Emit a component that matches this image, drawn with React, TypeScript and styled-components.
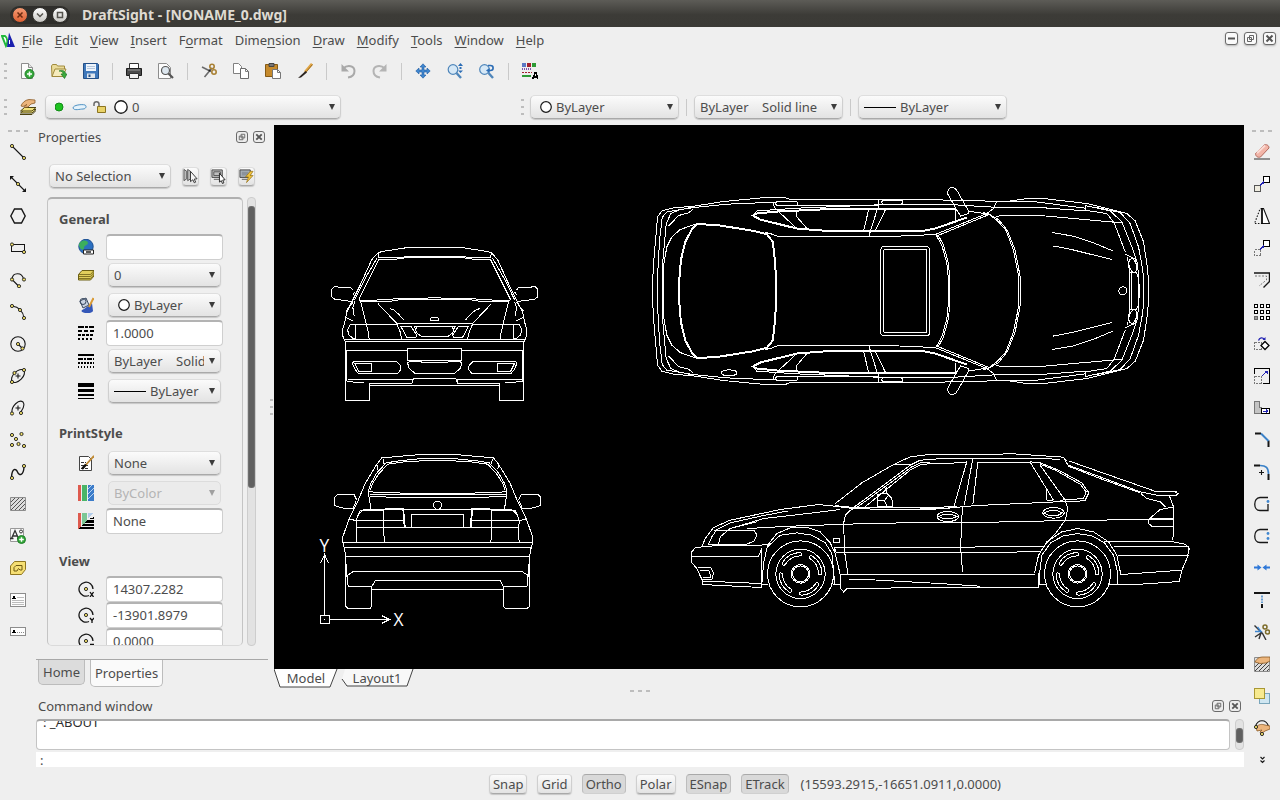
import React from "react";
import styled, { createGlobalStyle, css } from "styled-components";

const Global = createGlobalStyle`
  * { box-sizing: border-box; }
  body { margin: 0; background: #efefef; }
  body, button, select, input {
    font-family: "Noto Sans", "Open Sans", sans-serif;
    font-size: 13px;
    line-height: 18px;
    color: #4c4c4c;
  }
`;

/* ---------- shell ---------- */

const Shell = styled.div`
  display: flex;
  flex-direction: column;
  height: 100vh;
  min-height: 640px;
  background: #efefef;
  overflow: hidden;
`;

const TitleBar = styled.header`
  display: flex;
  align-items: center;
  gap: 12px;
  height: 27px;
  flex: none;
  padding: 2px 10px 0;
  background: linear-gradient(#5d5c57, #3c3b37 55%, #3b3a36);
`;

const WindowButtons = styled.div`
  display: flex;
  align-items: center;
  gap: 4px;
  height: 18px;
  padding: 0 2px;
  border-radius: 9px;
  background: #2f2e2b;
`;

const RoundButton = styled.button<{ $close?: boolean }>`
  display: flex;
  width: 16px;
  height: 16px;
  padding: 0;
  border: 1px solid #33322e;
  border-radius: 50%;
  background: ${(p) =>
    p.$close
      ? "linear-gradient(#f59b74, #de5f32)"
      : "linear-gradient(#ffffff, #c9c8c4)"};
`;

const WindowTitle = styled.h1`
  margin: 0;
  font-size: 14px;
  line-height: 18px;
  font-weight: 700;
  color: #dfdbd2;
`;

const MenuBar = styled.nav`
  display: flex;
  align-items: center;
  height: 26px;
  flex: none;
  padding: 0 4px 0 1px;
`;

const Logo = styled.svg`
  width: 14px;
  height: 16px;
  margin-right: 1px;
`;

const MenuButton = styled.button`
  border: 0;
  padding: 0 6px;
  background: none;
  u {
    text-underline-offset: 2px;
  }
`;

const MdiButtons = styled.div`
  display: flex;
  gap: 6px;
  margin-left: auto;
  padding-bottom: 3px;
`;

const FrameButton = styled.button<{ $raised?: boolean }>`
  display: flex;
  width: ${(p) => (p.$raised ? 13 : 12)}px;
  height: ${(p) => (p.$raised ? 13 : 12)}px;
  padding: 0;
  border: 1px solid #6a6a6a;
  border-radius: 3px;
  background: ${(p) => (p.$raised ? "#fafafa" : "#ececec")};
  box-shadow: ${(p) => (p.$raised ? "0 1px 2px #b5b5b5" : "none")};
`;

/* ---------- toolbars ---------- */

const ToolRow = styled.div`
  display: flex;
  align-items: center;
  height: 36px;
  flex: none;
`;

const ToolButton = styled.button`
  display: flex;
  align-items: center;
  justify-content: center;
  width: 32px;
  height: 32px;
  flex: none;
  padding: 0;
  border: 0;
  background: none;
`;

const Rule = styled.span`
  width: 1px;
  height: 17px;
  margin: 0 5px;
  flex: none;
  background: #c9c9c9;
`;

const Grip = styled.span<{ $across?: boolean }>`
  display: flex;
  flex: none;
  flex-direction: ${(p) => (p.$across ? "row" : "column")};
  align-items: center;
  justify-content: center;
  gap: ${(p) => (p.$across ? 4 : 5)}px;
  ${(p) => (p.$across ? "height: 11px;" : "width: 11px;")}
  &::before, &::after { content: ""; }
  &::before, &::after, i {
    width: ${(p) => (p.$across ? 4 : 3)}px;
    height: 2px;
    background: #bdbdbd;
  }
`;

const SideTools = styled.div`
  display: flex;
  flex-direction: column;
  align-items: center;
  width: 36px;
  flex: none;
  overflow: hidden;
`;

/* ---------- fields ---------- */

const raised = css`
  border: 1px solid #cfcfcf;
  border-top-color: #dedede;
  border-bottom-color: #a9a9a9;
  background: linear-gradient(#fbfbfb, #e3e3e3);
  box-shadow: 0 1px 1px #c6c6c6;
`;

const ComboBox = styled.label<{ $width?: number; $off?: boolean }>`
  display: flex;
  align-items: center;
  gap: 4px;
  height: 24px;
  width: ${(p) => (p.$width ? p.$width + "px" : "auto")};
  flex: ${(p) => (p.$width ? "none" : "1")};
  min-width: 0;
  padding: 0 4px 0 5px;
  border-radius: 5px;
  ${raised}
  ${(p) => p.$off && "border-color: #dcdcdc; background: #ebebeb; box-shadow: none;"}
  & > svg { flex: none; }
`;

const Picker = styled.select`
  appearance: none;
  flex: 1;
  min-width: 0;
  padding: 0;
  border: 0;
  background: none;
  overflow: hidden;
  outline: none;
  opacity: 1;
  &:disabled { color: #b4b4b4; }
`;

const TextField = styled.input`
  width: 117px;
  height: 26px;
  padding: 0 6px 2px;
  border: 1px solid #cfcfcf;
  border-top: 2px solid #b3b3b3;
  border-radius: 4px;
  background: #fff;
  outline: none;
`;

/* ---------- work area ---------- */

const Body = styled.div`
  display: flex;
  flex: 1;
  min-height: 0;
`;

const Center = styled.main`
  display: flex;
  flex-direction: column;
  flex: 1;
  min-width: 0;
`;

const Upper = styled.div`
  display: flex;
  flex: 1;
  min-height: 0;
`;

const Dock = styled.section`
  display: flex;
  flex-direction: column;
  width: 232px;
  flex: none;
`;

const DockHead = styled.div`
  display: flex;
  align-items: center;
  gap: 5px;
  height: 24px;
  flex: none;
  padding: 0 3px 0 2px;
`;

const DockTitle = styled.h2`
  flex: 1;
  margin: 0;
  font-size: 13px;
  line-height: 18px;
  font-weight: 400;
`;

const SelectionRow = styled.div`
  display: flex;
  align-items: center;
  gap: 11px;
  padding: 15px 13px 9px;
  flex: none;
`;

const SmallButton = styled.button`
  display: flex;
  align-items: center;
  justify-content: center;
  width: 17px;
  height: 19px;
  padding: 0;
  border-radius: 4px;
  ${raised}
`;

const Scroller = styled.div`
  display: flex;
  gap: 4px;
  flex: 1 1 0px;
  min-height: 0;
  padding: 0 12px 0 11px;
`;

const PropertyFrame = styled.div`
  flex: 1;
  overflow: hidden;
  padding: 5px 11px 0;
  border: 1px solid #c4c4c4;
  border-top: 2px solid #b0b0b0;
  border-bottom-color: #dadada;
  border-radius: 5px;
`;

const Track = styled.div`
  width: 9px;
  flex: none;
  padding: 9px 1px 0;
  border: 1px solid #cdcdcd;
  border-radius: 4px;
  background: #e2e2e2;
`;

const Thumb = styled.div<{ $share: number }>`
  height: ${(p) => p.$share}%;
  background: #606060;
  border-radius: 2px;
  box-shadow: 0 0 0 1px #6e6e6e;
`;

const Group = styled.section`
  margin-bottom: 12px;
`;

const GroupTitle = styled.h3`
  margin: 0;
  font-size: 13px;
  line-height: 30px;
  font-weight: 700;
`;

const Field = styled.div<{ $tall?: boolean }>`
  display: flex;
  align-items: center;
  height: ${(p) => (p.$tall ? 30 : 26)}px;
  & > svg { margin: 0 12px 0 19px; flex: none; }
`;

const FieldSlot = styled.div`
  display: flex;
  width: 117px;
  flex: none;
  padding: 0 2px;
`;

const DockTabs = styled.div`
  display: flex;
  align-items: flex-start;
  gap: 5px;
  height: 29px;
  margin-top: 13px;
  flex: none;
  padding: 0 2px;
  border-top: 1px solid #a8a8a8;
`;

const DockTab = styled.button<{ $active?: boolean }>`
  height: ${(p) => (p.$active ? 27 : 25)}px;
  padding: 0 4px;
  border: 1px solid #bcbcbc;
  border-top: 0;
  border-radius: 0 0 5px 5px;
  background: ${(p) => (p.$active ? "#fafafa" : "#dcdcdc")};
`;

const SplitHandle = styled.div<{ $across?: boolean }>`
  display: flex;
  flex: none;
  justify-content: center;
  ${(p) => (p.$across ? "height: 5px; align-items: center;" : "width: 6px;")}
`;

const Stage = styled.section`
  display: flex;
  flex-direction: column;
  flex: 1;
  min-width: 0;
`;

const Drawing = styled.svg`
  display: block;
  width: 100%;
  flex: 1;
  min-height: 0;
  background: #000;
  fill: none;
  stroke: #fff;
  stroke-width: 1px;
  shape-rendering: crispEdges;
  path, rect, circle, ellipse { vector-effect: non-scaling-stroke; }
  .heavy { stroke-width: 2px; }
  text {
    font-family: "Open Sans", sans-serif;
    font-size: 52px;
    font-weight: 400;
    fill: #fff;
    stroke: none;
  }
`;

const SheetTabs = styled.div`
  display: flex;
  gap: 2px;
  height: 19px;
  flex: none;
`;

const SheetTab = styled.button`
  display: grid;
  padding: 0;
  border: 0;
  background: none;
  & > * { grid-area: 1 / 1; }
  & > svg { width: 100%; height: 19px; }
  & > span { padding: 0 12px; position: relative; }
`;

const CommandHead = styled(DockHead)`
  height: 26px;
`;

const CommandBox = styled.div`
  display: flex;
  gap: 5px;
  height: 31px;
  flex: none;
`;

const History = styled.div`
  display: flex;
  flex-direction: column;
  justify-content: flex-end;
  flex: 1;
  overflow: hidden;
  padding: 0 6px;
  border: 1px solid #c4c4c4;
  border-top: 2px solid #a9a9a9;
  border-radius: 4px;
  background: #fff;
`;

const HistoryLine = styled.p`
  margin: 0;
  min-height: 18px;
  flex: none;
  line-height: 18px;
  color: #2e2e2e;
`;

const CommandInput = styled.input`
  height: 15px;
  margin-top: 2px;
  flex: none;
  padding: 0 4px;
  border: 0;
  background: #fff;
  outline: none;
`;

const StatusBar = styled.footer`
  display: flex;
  align-items: center;
  justify-content: center;
  gap: 10px;
  height: 33px;
  flex: none;
  padding: 1px 0 0 210px;
`;

const StatusButton = styled.button<{ $on?: boolean }>`
  height: 20px;
  padding: 0 3px;
  line-height: 16px;
  border-radius: 4px;
  ${raised}
  ${(p) =>
    p.$on &&
    "background: #d9d9d9; border-color: #a9a9a9 #bdbdbd #d0d0d0; box-shadow: none;"}
`;

const StatusText = styled.span`
  padding-left: 2px;
`;

const LayerGroup = styled.div`
  display: flex;
  align-items: center;
  gap: 1px;
  width: calc(40% + 5px);
  flex: none;
  min-width: 350px;
`;

const ComboIcons = styled.span`
  display: flex;
  align-items: center;
  gap: 6px;
  padding-left: 4px;
`;

const PropertyCombos = styled.div`
  display: flex;
  align-items: center;
  gap: 2px;
  padding-left: 2px;
`;

/* ---------- icons on a 16 x 16 grid ---------- */

const Dot = ({ x, y }: { x: number; y: number }) => (
  <circle cx={x} cy={y} r="1.6" fill="#f1e06a" stroke="#1d1d1d" strokeWidth=".9" />
);

const K = { fill: "none", stroke: "#161616", strokeWidth: 1.1 };
const B = { fill: "none", stroke: "#3c82c8", strokeWidth: 1.5 };
const crisp = { shapeRendering: "crispEdges" as const };

const page = "M2.5 .5h7l4 4v11h-11z";

const icons: Record<string, React.ReactNode> = {
  create: (
    <>
      <path d={page} fill="#fcfcfc" stroke="#8d8d8d" />
      <path d="M9.500 .5v4h4" fill="#e6e6e6" stroke="#8d8d8d" />
      <circle cx="10.500" cy="11" r="4.500" fill="#35a83a" stroke="#1f7d28" />
      <path d="M10.500 8.500v5M8 11h5" stroke="#fff" strokeWidth="1.500" />
    </>
  ),
  open: (
    <>
      <path d="M1 13.500L.5 3l1-1.500h4l1 1.500h7v3" fill="#eadb9a" stroke="#a08a3c" />
      <path d="M1 13.500L4 6h11l-3 7.500z" fill="#f6ecbd" stroke="#a08a3c" />
      <path d="M8 8c3 0 4 1 4 3h-2l3.500 4.500L16 11h-1.500c0-3-3-4.500-6.500-3z" fill="#3cab3c" stroke="#207a27" strokeWidth=".7" />
    </>
  ),
  save: (
    <>
      <path d="M.5 .5h14l1 1v14H.5z" fill="#3f78bb" stroke="#234f86" />
      <path d="M3 1h10v7H3z" fill="#eef4fb" />
      <path d="M4 3.500h8M4 5.500h8" stroke="#b4c7dd" />
      <path d="M4 10.500h8V15H4z" fill="#dfe6ee" />
      <path d="M5.500 11.500h2V14h-2z" fill="#234f86" />
    </>
  ),
  print: (
    <>
      <path d="M3.500 .5h9v6h-9z" fill="#fff" stroke="#333" />
      <path d="M.5 5.500h15v7H.5z" fill="#4b4b4b" stroke="#1d1d1d" />
      <path d="M2 7h12" stroke="#9a9a9a" />
      <path d="M3.500 10.500h9v5h-9z" fill="#f2f2f2" stroke="#333" />
    </>
  ),
  preview: (
    <>
      <path d="M.5 .5h8l4 4v11H.5z" fill="#fcfcfc" stroke="#8d8d8d" />
      <circle cx="7.500" cy="7.500" r="4" fill="#dde7ef" stroke="#555" strokeWidth="1.200" />
      <path d="M10.500 10.500l4.500 4.500" stroke="#555" strokeWidth="2.200" />
    </>
  ),
  cut: (
    <>
      <path d="M1 4l9 4.500M3.500 14L11 5" stroke="#6b6b6b" strokeWidth="1.600" />
      <circle cx="11" cy="3.500" r="2.200" fill="none" stroke="#a98135" strokeWidth="1.600" />
      <circle cx="13" cy="9" r="2.200" fill="none" stroke="#a98135" strokeWidth="1.600" />
      <circle cx="8.500" cy="7.500" r="1" fill="#222" />
    </>
  ),
  copy: (
    <>
      <path d="M.5 .5h5l3 3v7h-8z" fill="#fff" stroke="#808080" />
      <path d="M7.500 5.500h5l3 3v7h-8z" fill="#fff" stroke="#6b6b6b" />
      <path d="M12.500 5.500v3h3" fill="none" stroke="#808080" />
    </>
  ),
  paste: (
    <>
      <path d="M.5 1.500h12v12H.5z" fill="#c68a2c" stroke="#855a15" />
      <path d="M4 .5h5v3H4z" fill="#777" stroke="#444" />
      <path d="M7.500 6.500h5l3 3v6h-8z" fill="#fff" stroke="#777" />
      <path d="M12.500 6.500v3h3" fill="none" stroke="#777" />
    </>
  ),
  brush: (
    <>
      <path d="M15 .8L8 9" stroke="#e0a544" strokeWidth="2.600" />
      <path d="M15.500 1.500L8.500 9.700" stroke="#8a5d18" strokeWidth=".8" />
      <path d="M8.500 8L1 15l3-.5 6-5z" fill="#2b2420" />
    </>
  ),
  undo: (
    <>
      <path d="M3 5.500C8 1 14.500 3 14.500 8c0 4-3 6-6.500 6.500" fill="none" stroke="#a9a9a9" strokeWidth="2" />
      <path d="M1.500 1v7.500H9L6.500 6 4 3.500z" fill="#a9a9a9" />
    </>
  ),
  redo: (
    <>
      <path d="M13 5.500C8 1 1.500 3 1.500 8c0 4 3 6 6.500 6.500" fill="none" stroke="#b4b4b4" strokeWidth="2" />
      <path d="M14.500 1v7.500H7L9.500 6 12 3.500z" fill="#b4b4b4" />
    </>
  ),
  pan: (
    <path d="M8 .8L5 4h2v3H4V5L.8 8 4 11V9h3v3H5l3 3.200L11 12H9V9h3v2l3.200-3L12 5v2H9V4h2z" fill="#3f86cf" stroke="#1e5ba3" strokeWidth=".6" />
  ),
  zoom: (
    <>
      <circle cx="6" cy="6.500" r="4.800" fill="#d6e8f6" stroke="#4f86ba" strokeWidth="1.200" />
      <path d="M9.500 10l4.500 5" stroke="#4f86ba" strokeWidth="2.400" />
      <path d="M13.500 0l2.500 3h-5zM13.500 10L11 7.500h5z" fill="#2c6db5" />
      <path d="M12.500 4h2v2h-2z" fill="#2c6db5" />
    </>
  ),
  zoomBack: (
    <>
      <circle cx="5.500" cy="6.500" r="4.800" fill="#d6e8f6" stroke="#4f86ba" strokeWidth="1.200" />
      <path d="M9.500 10l4.500 5" stroke="#4f86ba" strokeWidth="2.400" />
      <path d="M9 2.500h2.500c3.500 0 3.500 5 0 5H9" fill="none" stroke="#2c6db5" strokeWidth="1.600" />
      <path d="M10.500 5L7 7.500l3.500 2.500z" fill="#2c6db5" />
    </>
  ),
  styles: (
    <g {...crisp}>
      <path d="M0 0h4v4H0z" fill="#5c78c4" />
      <path d="M5 0h4v4H5z" fill="#a3202f" />
      <path d="M10 0h4v4h-4z" fill="#2e9a35" />
      <path d="M0 6h10" stroke="#7c53b0" strokeWidth="2" strokeDasharray="1 1" />
      <path d="M0 9.500h10" stroke="#a3202f" strokeDasharray="2 1" />
      <path d="M0 12.500h9" stroke="#2e9a35" strokeWidth="2" />
      <path d="M10.500 16l2.500-6h1l2 6M11.500 14h4" fill="none" stroke="#000" strokeWidth="1.500" />
    </g>
  ),
  layers: (
    <>
      <path d="M.5 14l4-3.500H16L12 14z" fill="#f1e27c" stroke="#4d4310" />
      <path d="M.5 12l4-3.500H16L12 12z" fill="#f1e27c" stroke="#4d4310" />
      <path d="M0 15.500h12l4-4" fill="none" stroke="#4d4310" />
      <path d="M1 7c1-3 4-6 8-6.500l6 .5v3l-4 1-3 3-4 .5c0-1 2-2 3-3L3 7.500z" fill="#ecb57c" stroke="#8a5a26" strokeWidth=".8" />
    </>
  ),
  /* drawing tools */
  line: (<><path d="M2 2l12 12" {...K} /><Dot x={2} y={2} /><Dot x={14} y={14} /></>),
  ray: (
    <>
      <path d="M1 1l14 14" {...K} />
      <path d="M0 0h4L0 4zM16 16h-4l4-4z" fill="#161616" />
      <Dot x={8} y={8} />
    </>
  ),
  polygon: <path d="M.8 8l3.700-7h7l3.700 7-3.700 7h-7z" {...K} strokeWidth={1.4} />,
  rectangle: (<><path d="M1.500 4.500h13v7h-13z" {...K} {...crisp} /><Dot x={2} y={4.5} /><Dot x={14} y={12} /></>),
  polyline: (<><path d="M8.500 14L2 7.500C2.500 0 12 0 13.500 7" {...K} /><Dot x={2} y={7.5} /><Dot x={14} y={7.5} /><Dot x={9} y={14.2} /></>),
  arc: (<><path d="M2 2c7 1 11 5 12 12" {...K} /><Dot x={2} y={2} /><Dot x={10} y={6} /><Dot x={14} y={14} /></>),
  circle: (<><circle cx="8" cy="8" r="7.200" {...K} /><path d="M8 8l4 4" {...K} /><Dot x={8} y={8} /><Dot x={12.5} y={12.5} /></>),
  ellipse: (
    <>
      <ellipse cx="8" cy="8" rx="8" ry="4.500" transform="rotate(-45 8 8)" {...K} />
      <path d="M8 5.500v5M5.500 8h5" {...K} />
      <Dot x={2} y={14} /><Dot x={14} y={2} /><Dot x={4.5} y={5} />
    </>
  ),
  ellipseArc: (
    <>
      <path d="M2 13C1 6 9-1 13 2c3 4-1 8-3 11" {...K} />
      <path d="M8 5.500v5M5.500 8h5" {...K} />
      <Dot x={2} y={13.5} /><Dot x={11} y={13} />
    </>
  ),
  points: (<><Dot x={2} y={3} /><Dot x={11.5} y={2} /><Dot x={6} y={7} /><Dot x={2} y={13} /><Dot x={8.5} y={12} /><Dot x={14} y={14} /></>),
  spline: (<><path d="M1.500 13C2 4 6 4 7.500 8s6 4 6.500-5" {...K} strokeWidth={1.4} /><Dot x={2} y={14} /><Dot x={14} y={2} /></>),
  hatch: (
    <>
      <path d="M.5 1.500h15v13H.5z" fill="#dcdcdc" stroke="#8c8c8c" />
      <path d="M1 6l4-4M1 10l8-8M1 14l12-12M5 14l10-10M9 14l6-6M13 14l2-2" stroke="#555" />
    </>
  ),
  block: (
    <>
      <path d="M.5 .5h13v13H.5z" fill="#f8f8f8" stroke="#999" />
      <path d="M1.500 10.500L5 2.500l3.500 8M3 8h4M0 10.500h3.500M7 10.500h2" fill="none" stroke="#333" strokeWidth="1.300" />
      <circle cx="11" cy="3.500" r="1.500" fill="none" stroke="#333" />
      <circle cx="11.500" cy="11.500" r="4" fill="#35a83a" stroke="#1f7d28" />
      <path d="M11.500 9.200v4.600M9.200 11.500h4.600" stroke="#fff" strokeWidth="1.400" />
    </>
  ),
  region: (
    <>
      <path d="M.5 14.500V6l4-4.500h11v8l-4 5z" fill="#f6df73" stroke="#8f7620" />
      <path d="M4 11V7.500L6 5.500h6V10h-2L8.500 8.500 7 11z" fill="none" stroke="#6f5a12" />
    </>
  ),
  note: (
    <g {...crisp}>
      <path d="M.5 1.500h15v13H.5z" fill="#fdfdfd" stroke="#8c8c8c" />
      <path d="M2.500 7l1.500-3 1.500 3M3 6h2" fill="none" stroke="#000" />
      <path d="M7 5.500h7M2 8.500h12M2 10.500h12M2 12.500h12" stroke="#bcbcbc" />
    </g>
  ),
  label: (
    <g {...crisp}>
      <path d="M.5 3.500h15v8H.5z" fill="#fdfdfd" stroke="#8c8c8c" />
      <path d="M2.500 9L4 6l1.500 3M3 8h2" fill="none" stroke="#000" />
      <path d="M7 8.500h7" stroke="#888" strokeDasharray="1 1" />
    </g>
  ),
  /* modify tools */
  erase: (
    <>
      <path d="M0 15h16" stroke="#777" strokeWidth="1.600" />
      <path d="M1.500 9.500L10 1c2-1 5 0 5 3l-8.500 9c-3 1-5-1-5-3.500z" fill="#f2b5a8" stroke="#b4695d" />
      <path d="M3 9l8-7.500" stroke="#fbdcd5" strokeWidth="2" />
    </>
  ),
  duplicate: (
    <g {...crisp}>
      <path d="M.5 9.500h6v6h-6z" fill="#efece0" stroke="#555" />
      <path d="M9.500 .5h6v6h-6z" fill="#fff" stroke="#000" />
      <path d="M6 9.500l4-4" stroke="#2424b4" strokeWidth="1.500" />
      <path d="M7 6h3v3z" fill="#2424b4" />
    </g>
  ),
  mirror: (
    <>
      <path d="M8 .5h1.500L15.500 15.500H8z" {...K} fill="#fff" />
      <path d="M8 .5L6 1 .5 15.500H8" {...K} strokeDasharray="1.500 1.500" />
      <path d="M8 0v16" stroke="#000" strokeWidth="1.400" />
    </>
  ),
  move: (
    <g {...crisp}>
      <path d="M.5 9.500h6v6h-6z" fill="none" stroke="#777" strokeDasharray="2 1" />
      <path d="M9.500 .5h6v6h-6z" fill="#fff" stroke="#000" />
      <path d="M6 9.500l4-4" stroke="#2424b4" strokeWidth="1.500" />
      <path d="M7 6h3v3z" fill="#2424b4" />
    </g>
  ),
  offset: (
    <>
      <path d="M0 1h15.500v8.500L9.500 15.500" {...K} strokeWidth={1.4} />
      <path d="M1 4h11.500v4L5 14" fill="none" stroke="#777" strokeDasharray="2 1.500" />
    </>
  ),
  pattern: (
    <g {...crisp} fill="#fff" stroke="#000" strokeWidth="1">
      <path d="M.5 .5h3v3h-3zM6.500 .5h3v3h-3zM12.500 .5h3v3h-3zM.5 6.500h3v3h-3zM6.500 6.500h3v3h-3zM12.500 6.500h3v3h-3zM6.500 12.500h3v3h-3zM12.500 12.500h3v3h-3z" />
      <path d="M.5 12.500h3v3h-3z" fill="#999" stroke="#666" />
    </g>
  ),
  rotate: (
    <>
      <path d="M.5 6.500h7v7h-7z" fill="none" stroke="#777" strokeDasharray="2 1" {...crisp} />
      <path d="M11 5.500l4 4-4 4-4-4z" fill="#fff" stroke="#000" strokeWidth="1.300" />
      <path d="M4.500 4.500c1-3 4-3.500 6-1" fill="none" stroke="#2424b4" strokeWidth="1.300" />
      <path d="M8.500 4h3V1z" fill="#2424b4" />
    </>
  ),
  scale: (
    <g {...crisp}>
      <path d="M.5 6V.5h15v15H9" fill="none" stroke="#000" />
      <path d="M.5 8.500h7v7h-7z" fill="none" stroke="#777" strokeDasharray="2 1" />
      <path d="M8 8l4-4" stroke="#2424b4" strokeWidth="1.200" />
      <path d="M10 3h4v4z" fill="#2424b4" />
    </g>
  ),
  stretch: (
    <g {...crisp}>
      <path d="M.5 1.500h5v6h2v6h-7z" fill="#c4c4c4" stroke="#777" />
      <path d="M7.500 8.500h8v5h-8z" fill="#fff" stroke="#000" />
      <path d="M9 11h3" stroke="#2424b4" />
      <path d="M12 9l3 2-3 2z" fill="#2424b4" />
    </g>
  ),
  chamfer: (<><path d="M1 1.500h6M14.500 8.500V15" {...K} strokeWidth={2} /><path d="M7 1.500l7.500 7.500" {...B} strokeWidth={2} /></>),
  fillet: (
    <>
      <path d="M0 1.500h6M14.500 10V16" {...K} strokeWidth={2} />
      <path d="M5 8.500h5M7.500 6v5" {...K} />
      <path d="M6 1.500c6 0 8.500 2 8.500 8.500" {...B} strokeWidth={1.6} />
    </>
  ),
  weld: (
    <>
      <path d="M14 1.500H6C-1 2-1 14.500 6 14.500h8V8" {...K} strokeWidth={1.3} />
      <circle cx="14" cy="5.500" r="1.400" fill="#3f86cf" />
    </>
  ),
  split: (
    <>
      <path d="M14 1.500H6C-1 2-1 14.500 6 14.500h8" {...K} strokeWidth={1.3} />
      <circle cx="14" cy="5.500" r="1.400" fill="#3f86cf" />
      <circle cx="14" cy="10.500" r="1.400" fill="#3f86cf" />
    </>
  ),
  join: (
    <>
      <path d="M0 7.500h4M12 7.500h4" stroke="#2f78d8" strokeWidth="1.800" />
      <path d="M3.500 4.500l4 3-4 3zM12.500 4.500l-4 3 4 3z" fill="#2f78d8" />
    </>
  ),
  extend: (
    <>
      <path d="M0 1h16M8 12v4" {...K} strokeWidth={2} />
      <path d="M8 3.500V11" {...B} strokeDasharray="2 1" />
    </>
  ),
  trim: (
    <>
      <path d="M.5 1.500l8 8L12 16M1 13l6-4-2 6" stroke="#333" fill="none" strokeWidth="1.400" />
      <path d="M1 7.500h6L3.500 3" fill="none" stroke="#3f86cf" strokeWidth="1.400" />
      <circle cx="11" cy="3" r="2" fill="none" stroke="#7d6c2a" strokeWidth="1.500" />
      <circle cx="13.500" cy="8" r="2" fill="none" stroke="#7d6c2a" strokeWidth="1.500" />
    </>
  ),
  hatchEdit: (
    <>
      <path d="M.5 1.500h15v14H.5z" fill="#dcdcdc" stroke="#8c8c8c" />
      <path d="M1 11l4-4M1 15l8-8M5 15l9-9M9 15l6-6M13 15l2-2" stroke="#444" />
      <path d="M1 6c2-4 5-5 8-5h7v4l-4 2-6 .5z" fill="#ecb57c" stroke="#8a5a26" strokeWidth=".8" />
    </>
  ),
  order: (
    <g {...crisp}>
      <path d="M5.500 5.500h10v10h-10z" fill="#cfe6f1" stroke="#7aa6bb" />
      <path d="M.5 .5h10v10H.5z" fill="#f7ea8f" stroke="#a99834" />
    </g>
  ),
  polyEdit: (
    <>
      <path d="M1.500 6C4-1 12-1 14.500 6" {...K} />
      <path d="M2 7c3-3 6-3 9-2l5 1v3l-5 2-4 3-1-2 2-2-5 1z" fill="#ecb57c" stroke="#8a5a26" strokeWidth=".8" />
      <Dot x={2} y={7} /><Dot x={8} y={14} />
    </>
  ),
  more: <path d="M6.500 5l2 2 2-2M6.500 8.500l2 2 2-2" {...K} />,
  /* properties */
  globe: (
    <>
      <circle cx="8" cy="7.500" r="7.200" fill="#2b6fc0" stroke="#1b4f92" />
      <path d="M4 2c3-1 6 0 6 2S6 6 6 9s-3 2-4.500-1S2 3 4 2z" fill="#3cae5d" />
      <path d="M5.500 11h10v4h-10z" fill="#fff" stroke="#222" />
      <path d="M8 13h5" stroke="#222" strokeWidth="1.400" />
    </>
  ),
  stack: (
    <>
      <path d="M.5 13V7.500L4 3.500h12V9l-3.500 4z" fill="#e2cf5c" stroke="#6d6015" />
      <path d="M.5 7.500h12l3.500-4M.5 9.500h12l3.500-4M.5 11.500h12l3.500-4" fill="none" stroke="#6d6015" strokeWidth=".8" />
    </>
  ),
  paint: (
    <>
      <path d="M7 16c-5-1-4-3-1-4l8-6 1 8c-1 2-5 2.500-8 2z" fill="#3457b8" />
      <path d="M2 4l6-3 3 7-6 3z" fill="#c9d3e2" stroke="#39485f" />
      <circle cx="5" cy="4.500" r="3" fill="none" stroke="#39485f" />
      <path d="M15.500 1L11 10" stroke="#d99a35" strokeWidth="2" />
    </>
  ),
  lineScale: (
    <g {...crisp} stroke="#000" strokeWidth="2">
      <path d="M0 2h16" strokeDasharray="6 1 3 1" />
      <path d="M0 6h16" strokeDasharray="4 2" />
      <path d="M0 10h16" strokeDasharray="3 1" />
      <path d="M0 14h16" strokeDasharray="2 2" />
    </g>
  ),
  lineStyle: (
    <g {...crisp} stroke="#000" strokeWidth="2">
      <path d="M0 2h16" />
      <path d="M0 6h16" strokeDasharray="5 1 2 1" />
      <path d="M0 10h16" strokeDasharray="2 1" />
      <path d="M0 14h16" strokeDasharray="1 2" />
    </g>
  ),
  lineWeight: (
    <g {...crisp}>
      <path d="M0 0h16v4H0zM0 6h16v3H0zM0 11h16v2H0zM0 15h16v1H0z" fill="#000" />
    </g>
  ),
  printStyle: (
    <>
      <path d="M1.500 1.500h9l3 3v11h-12z" fill="#fff" stroke="#444" />
      <path d="M3 7.500h5M3 10.500h8M3 13.500h8" stroke="#333" strokeDasharray="3 1" />
      <path d="M16 .8L5 13" stroke="#c08a34" strokeWidth="1.800" />
      <path d="M8 9.500L4 14" stroke="#111" strokeWidth="2.400" />
    </>
  ),
  colorBars: (
    <g {...crisp}>
      <path d="M0 0h3v16H0z" fill="#de5a4e" />
      <path d="M4 0h5v16H4z" fill="#4bb568" />
      <path d="M10 0h6v16h-6z" fill="#3c7cc9" />
      <path d="M10 4l4-4M10 9l6-6M10 14l6-6" stroke="#b9d4f0" />
    </g>
  ),
  colorTable: (
    <g {...crisp}>
      <path d="M0 0h3v14l-3 2z" fill="#de5a4e" />
      <path d="M4 0h5v8l-5 5z" fill="#7cc795" />
      <path d="M10 0h5l-5 6z" fill="#b3cdea" />
      <path d="M16 4v2h-5zM9 7h7v3H6zM5 11h11v2H3zM2 14h14v2H0z" fill="#000" />
    </g>
  ),
  centerX: (
    <>
      <path d="M11 14.500A7 7 0 1 1 15 8" {...K} strokeWidth={1.3} />
      <path d="M12 11l3.500 5M15.500 11L12 16" stroke="#111" strokeWidth="1.300" />
      <Dot x={8} y={8} />
    </>
  ),
  centerY: (
    <>
      <path d="M11 14.500A7 7 0 1 1 15 8" {...K} strokeWidth={1.3} />
      <path d="M12 11l2 2.500L16 11M14 13.500V16" stroke="#111" fill="none" strokeWidth="1.300" />
      <Dot x={8} y={8} />
    </>
  ),
  centerZ: (
    <>
      <path d="M11 14.500A7 7 0 1 1 15 8" {...K} strokeWidth={1.3} />
      <path d="M12 11.500h3.500L12 15.500h4" stroke="#111" fill="none" strokeWidth="1.300" />
      <Dot x={8} y={8} />
    </>
  ),
  pickSet: (
    <>
      <path d="M1 1v12l3-2V3zM5 1v12l3-2V3z" fill="#bdbdbd" stroke="#555" />
      <path d="M8 3l7 8-3 .3 1.500 3.200-1.500.7-1.500-3.200L8 14z" fill="#f4f4f4" stroke="#333" />
    </>
  ),
  pickScreen: (
    <>
      <path d="M1 1.500h11v8H1z" fill="#bfbfbf" stroke="#444" />
      <path d="M3 3.500h7v4H3zM3 11.500h6" fill="none" stroke="#555" />
      <path d="M9 5l6 7-2.500.3 1.200 3-1.500.7-1.200-3L9 14.500z" fill="#fff" stroke="#222" />
    </>
  ),
  quickPick: (
    <>
      <path d="M1 1.500h11v8H1z" fill="#a8b0b8" stroke="#444" />
      <path d="M3 3.500h7v4H3z" fill="#8b939c" />
      <path d="M3 11.500h6" stroke="#555" />
      <path d="M12 3L7 9h3l-2 6 7-7.500h-3L15 3z" fill="#f0c23c" stroke="#8f6d12" strokeWidth=".7" />
    </>
  ),
};

const Icon = ({ name }: { name: string }) => (
  <svg width="16" height="16" viewBox="0 0 16 16" aria-hidden="true">
    {icons[name]}
  </svg>
);

const Swatch = ({ size = 12 }: { size?: number }) => (
  <svg width={size} height={size} viewBox="0 0 12 12">
    <circle cx="6" cy="6" r="5.300" fill="#fff" stroke="#1a1a1a" strokeWidth="1.200" />
  </svg>
);

const Stroke = () => (
  <svg width="32" height="3" viewBox="0 0 32 3">
    <path d="M0 1.500h32" stroke="#000" />
  </svg>
);

const Arrow = ({ off }: { off?: boolean }) => (
  <svg width="8" height="8" viewBox="0 0 8 8">
    <path d="M1 1h6L4 7z" fill={off ? "#a0a0a0" : "#3c3c3c"} />
  </svg>
);

const LayerState = () => (
  <svg width="53" height="14" viewBox="1 0 53 14">
    <circle cx="5" cy="7" r="4" fill="#1fc321" stroke="#128a18" />
    <path d="M19 8c0-3 9-4 12-3 2 1 1 4-2 4s-9 2-10-1z" fill="#e6f3fb" stroke="#4f92c4" />
    <path d="M40 6V4c0-3 5-3 5 0v3" fill="none" stroke="#6a6a6a" strokeWidth="1.500" />
    <path d="M43.500 6.500h8v6h-8z" fill="#e9d268" stroke="#8b7420" />
  </svg>
);

interface ComboProps {
  name: string;
  value: string;
  width?: number;
  off?: boolean;
  children?: React.ReactNode;
}

const Combo = ({ name, value, width, off, children }: ComboProps) => (
  <ComboBox $width={width} $off={off}>
    {children}
    <Picker aria-label={name} disabled={off} defaultValue={value}>
      <option>{value}</option>
    </Picker>
    <Arrow off={off} />
  </ComboBox>
);

const RestoreGlyph = () => (
  <svg width="100%" height="100%" viewBox="0 0 11 11">
    <path d="M4.500 2.500h4v4h-4zM2.500 4.500h4v4h-4z" fill="none" stroke="#666" />
  </svg>
);
const CloseGlyph = () => (
  <svg width="100%" height="100%" viewBox="0 0 11 11">
    <path d="M2.500 2.500l6 6M8.500 2.500l-6 6" stroke="#555" strokeWidth="2" />
  </svg>
);
const MinusGlyph = () => (
  <svg width="100%" height="100%" viewBox="0 0 11 11">
    <path d="M2 5.500h7" stroke="#555" strokeWidth="2" />
  </svg>
);

/* ---------- drawing ---------- */

const slot = (cx: number, cy: number, from: number, to: number) => {
  const at = (r: number, deg: number) => {
    const a = (deg * Math.PI) / 180;
    return `${(cx + r * Math.cos(a)).toFixed(1)} ${(cy + r * Math.sin(a)).toFixed(1)}`;
  };
  return `M${at(64, from)}A64 64 0 0 1 ${at(64, to)}A5 5 0 0 1 ${at(54, to)}A54 54 0 0 0 ${at(54, from)}A5 5 0 0 1 ${at(64, from)}`;
};

const Wheel = ({ x, y }: { x: number; y: number }) => (
  <>
    <circle cx={x} cy={y} r="99" />
    <circle cx={x} cy={y} r="74" />
    <circle cx={x} cy={y} r="28" />
    <circle cx={x} cy={y} r="24" />
    {[-148, -58, 32, 122].map((a) => (
      <path key={a} d={slot(x, y, a, a + 56)} />
    ))}
  </>
);

const FrontHalf = () => (
  <>
    <path d="M374 52H292L215 64L203 68L185 88L150 165L130 205L110 245L104 275L98 295V318L104 332" />
    <path d="M203 68L206 82H275L285 79H374M206 88L275 86L285 82H374M206 88L146 208M200 84L165 145L133 210" />
    <path d="M146 208L150 212L210 209L270 205L345 204L374 202M150 214H235L265 209L374 207" />
    <path d="M128 180L122 172L72 170L64 178V200L74 207L125 214M133 186L128 195" />
    <path d="M152 216L168 280L175 310L177 328M203 220L258 278L270 305L275 328M238 235L252 240L265 252L282 270M134 214L128 232L132 258M108 262L128 272M130 214L108 242" />
    <path d="M374 280H260M104 328H374M104 334H374M120 283H262M137 283V326M120 283L112 298L116 314L130 326H137" />
    <path d="M273 290H303L320 315L316 322H290ZM374 290H313L320 308L335 320H374M313 296H320V290" />
    <path d="M107 334V511H178V460H305L310 446H374M178 466H374M110 360V452M113 449H306V456M110 454L162 458" />
    <path d="M107 360H292M374 355H292V391H374M292 398L298 394L374 397M292 398L297 415L315 430H374" />
    <path d="M130 394H258L270 405L272 418L262 430H145L135 418L127 400ZM134 400H184V424H146Z" />
  </>
);

const RearHalf = () => (
  <>
    <path d="M383 43H330L215 53L200 72L165 130L145 178L115 240L98 290V308L102 322L107 348V498L115 506H178L185 498V440" />
    <path d="M383 56H325L265 62L228 68L200 98L182 130L176 148V168L182 205M383 60L290 64L232 72L205 102L186 132L180 150M200 72L202 88M218 56L222 72" />
    <path d="M176 152L192 156L320 160H383M178 162H310L320 164H383M178 168L220 168L230 171H383" />
    <path d="M140 180L132 164H80L73 172V196L95 203L128 206L138 182" />
    <path d="M383 209H160L145 222L138 240L140 280L138 305M148 212H220V270L223 305M146 222L148 212M138 240H285M225 205H280L285 260M278 207L282 260M138 262H383M115 240L122 237L138 242" />
    <path d="M98 308H383M102 322H383M107 348H383M110 370V410M383 395H128L112 405V432L116 439H185L195 422H383M185 448H383" />
  </>
);

const PlanHalf = () => (
  <>
    <path d="M38 333V290L40 250L52 110L65 92L100 83L160 78L250 64L375 52H435L450 58H850L1100 64L1160 55H1210L1340 70L1400 85L1460 100L1485 122L1510 185L1520 250L1525 300V333" />
    <path d="M52 333V290L58 180L66 112L80 95L160 82L260 72L400 66L450 63M68 333V240L78 130L92 100L115 90L160 80M158 88L145 98L115 106L85 138M71 333V250L80 200L95 170L120 148L165 132" />
    <path className="heavy" d="M115 333L118 290L122 240L135 185L155 148L172 131L240 136L340 152L380 162L398 185L405 250L409 333" />
    <path d="M375 156L390 160L414 169H745L885 163M400 66L402 82L470 145M470 95V110L503 148M685 90L670 152M712 85L686 168M735 90L705 152M715 56V85" />
    <path className="heavy" d="M945 87H560L410 94L350 100L338 106L360 118L470 145L560 152H850L885 145L980 112" />
    <path d="M338 105L350 92L470 84L712 74H945L1080 82H1200L1335 92M470 76H712M945 87V118" />
    <rect x="725" y="60" width="62" height="12" rx="6" />
    <rect x="407" y="64" width="65" height="13" rx="6" />
    <path d="M888 165L905 195L920 250L925 300V333M893 163L910 195L925 250L929 300V333M885 163L1040 100M888 168L1044 104" />
    <path d="M1030 96L1050 105L1072 122L1097 150L1120 210L1136 290V333M1040 98L1075 118L1101 150L1125 210L1140 290V333" />
    <path d="M922 34L930 22L945 24L952 34L985 92V100L962 108L950 90L922 40ZM984 94L1010 96L1040 102M1068 66L1060 85L1040 100" />
    <path d="M1062 112L1080 106H1200L1445 128M1110 64L1180 64L1335 84M1335 78V90L1400 100L1422 128L1455 215M1335 76L1410 92L1445 125L1475 200L1492 250L1498 333M1370 82L1440 97L1470 130L1495 200L1508 270L1511 333" />
    <ellipse cx="1478" cy="256" rx="11" ry="21" transform="rotate(-15 1478 256)" />
    <path d="M1455 222L1485 236V250M1462 230L1468 276V333M1473 276V333M1468 276H1488L1494 290V333M1235 157L1300 168L1365 190L1420 213M1237 197L1290 207L1415 238" />
  </>
);

const SideView = () => (
  <>
    <path d="M463 192L545 128L640 73L690 50L745 43H850L1000 41L1150 51L1160 62M640 73H690M523 200L690 75L720 60L800 54H1080L1140 58" />
    <path d="M530 202L695 80L720 68L750 66M552 202L692 88L725 72L860 67M893 66H1050L1120 180M860 64L822 196M878 55L852 195M893 65L878 192" />
    <path d="M1080 75L1155 180M1050 65L1080 68L1135 90L1205 128L1226 158L1215 180L1190 184L1100 182M1080 72L1130 92L1200 132L1218 155L1210 175L1140 180M1098 148V180" />
    <path d="M463 196L523 202H640L830 200M520 206L750 208L890 196L1150 184M640 202L810 205" />
    <path d="M66 318L75 295L100 262L150 240L300 208L415 193L463 198L520 205M84 314L95 290L110 268L150 248L250 226L325 212M115 312L120 290L150 265L250 235L400 218L480 208M150 265L230 245" />
    <path d="M200 265L330 258L560 250L780 246H930L1200 240L1480 238" />
    <path d="M100 270H222L230 285L222 302L200 312H84M66 318L268 314" />
    <path d="M66 320L45 322L35 335V368L50 385L66 420L68 433L245 442V322M35 348H235L245 325M52 382H92L100 400L95 418H66M60 390H86L92 412H68M66 424H100L245 430" />
    <path d="M245 433H264M245 432L250 370L262 315L290 280L330 263H385L420 275L450 308L465 340L480 403M262 320L300 285L350 278L395 285L435 308L455 340L464 433" />
    <path d="M458 433H480M480 403H1064M503 401L494 340L490 250L496 225L508 212L520 205M480 403L482 445L490 455L500 445L750 442H1075V398M505 418H560L780 430L900 438" />
    <path d="M462 332V322H750L1090 318M468 337H750L1080 335M462 322L468 337" />
    <rect x="461" y="295" width="17" height="11" />
    <ellipse cx="803" cy="229" rx="32" ry="15" />
    <path d="M775 229L790 223H815L830 229L815 235H790ZM1092 218L1107 212H1132L1147 218L1132 226H1107Z" />
    <ellipse cx="1120" cy="218" rx="32" ry="16" />
    <path d="M848 200L843 250L842 330L847 395M1155 180L1163 205L1155 240L1130 275L1095 315" />
    <path d="M593 162L620 160L635 175L637 200H593ZM593 182H612L625 165M612 182L622 200M605 162L620 142V160" />
    <Wheel x={361} y={401} />
    <Wheel x={1192} y={401} />
    <path d="M1063 398L1075 345L1100 305L1145 275L1192 265L1240 275L1285 305L1310 345L1322 403M1078 433V400L1085 345L1112 307L1150 287L1192 280L1235 287L1272 307L1300 345L1312 395V432M1075 433H1096M1285 432H1380L1497 424L1505 390L1322 403" />
    <path d="M1150 51L1165 78L1260 115L1380 158M1165 62L1430 155H1490M1162 74L1260 110L1380 155L1430 165H1488L1493 160L1485 155" />
    <path d="M1382 160L1400 175L1440 185L1455 200M1468 168L1480 200V258L1478 300M1480 200L1440 208L1405 238V250L1415 258H1480M1405 236H1480" />
    <path d="M1270 305H1478L1515 312L1527 325L1522 350L1505 390M1300 320H1525M1313 346H1525" />
  </>
);

const Blueprint = () => (
  <Drawing viewBox="274 125 970 544" role="img" aria-label="Car drawing">
    <g transform="translate(310.2 230.2) scale(.33333)">
      <FrontHalf />
      <g transform="translate(747 0) scale(-1 1)"><FrontHalf /></g>
      <rect x="361" y="262" width="24" height="10" rx="5" />
    </g>
    <g transform="translate(310.2 440.2) scale(.33333)">
      <RearHalf />
      <g transform="translate(765 0) scale(-1 1)"><RearHalf /></g>
      <circle cx="382" cy="195" r="12" />
      <rect x="304" y="223" width="157" height="38" />
      <rect x="31" y="526" width="28" height="25" />
      <path d="M43 536V540M59 538H238M214 526L238 538L214 550M43 526V343M31 368L43 343L55 368" />
      <text x="250" y="556">X</text>
      <text x="28" y="334">Y</text>
    </g>
    <g transform="translate(640.2 180.2) scale(.33333)">
      <PlanHalf />
      <g transform="translate(0 665) scale(1 -1)"><PlanHalf /></g>
      <rect x="722" y="199" width="146" height="267" rx="9" />
      <rect x="731" y="208" width="128" height="250" rx="4" />
      <circle cx="1448" cy="332" r="12" />
      <ellipse cx="267" cy="578" rx="23" ry="9" />
    </g>
    <g transform="translate(680.2 440.2) scale(.33333)">
      <SideView />
    </g>
  </Drawing>
);

/* ---------- data ---------- */

const menus = [
  "_File", "_Edit", "_View", "_Insert", "F_ormat", "Dime_nsion",
  "_Draw", "_Modify", "_Tools", "_Window", "_Help",
];

const standard = [
  ["create", "open", "save"],
  ["print", "preview"],
  ["cut", "copy", "paste", "brush"],
  ["undo", "redo"],
  ["pan", "zoom", "zoomBack"],
  ["styles"],
];

const drawTools = [
  "line", "ray", "polygon", "rectangle", "polyline", "arc", "circle", "ellipse",
  "ellipseArc", "points", "spline", "hatch", "block", "region", "note", "label",
];

const modifyTools = [
  "erase", "duplicate", "mirror", "move", "offset", "pattern", "rotate", "scale",
  "stretch", "chamfer", "fillet", "weld", "split", "join", "extend", "trim",
  "hatchEdit", "order", "polyEdit", "more",
];

const modes: [string, boolean][] = [
  ["Snap", false], ["Grid", false], ["Ortho", true],
  ["Polar", false], ["ESnap", true], ["ETrack", true],
];

const MenuLabel = ({ text }: { text: string }) => {
  const i = text.indexOf("_");
  return (
    <>
      {text.slice(0, i)}
      <u>{text[i + 1]}</u>
      {text.slice(i + 2)}
    </>
  );
};

const ComboField = ({ icon, children, ...rest }: ComboProps & { icon: string }) => (
  <Field $tall>
    <Icon name={icon} />
    <FieldSlot>
      <Combo {...rest}>{children}</Combo>
    </FieldSlot>
  </Field>
);

const InputField = ({ icon, name, value }: { icon: string; name: string; value: string }) => (
  <Field>
    <Icon name={icon} />
    <TextField aria-label={name} defaultValue={value} />
  </Field>
);

const gap = "\u00a0\u00a0\u00a0\u00a0";

export default function App() {
  return (
    <Shell>
      <Global />
      <TitleBar>
        <WindowButtons>
          <RoundButton $close aria-label="Close">
            <svg width="14" height="14" viewBox="0 0 14 14">
              <path d="M4.500 4.500l5 5M9.500 4.500l-5 5" stroke="#6b2a10" strokeWidth="1.500" />
            </svg>
          </RoundButton>
          <RoundButton aria-label="Minimize">
            <svg width="14" height="14" viewBox="0 0 14 14">
              <path d="M4 5.500l3 3 3-3" fill="none" stroke="#55534e" strokeWidth="1.500" />
            </svg>
          </RoundButton>
          <RoundButton aria-label="Maximize">
            <svg width="14" height="14" viewBox="0 0 14 14">
              <path d="M4.500 4.500h5v5h-5z" fill="none" stroke="#55534e" strokeWidth="1.500" />
            </svg>
          </RoundButton>
        </WindowButtons>
        <WindowTitle>DraftSight - [NONAME_0.dwg]</WindowTitle>
      </TitleBar>

      <MenuBar>
        <Logo viewBox="0 0 14 16">
          <path d="M1 4h3c3 2 3 7 1 10z" fill="#fff" stroke="#1fb83a" strokeWidth="2" />
          <path d="M8 .5L14 15H6z" fill="#1a1fae" />
          <path d="M8.500 8v4" stroke="#fff" />
        </Logo>
        {menus.map((m) => (
          <MenuButton key={m}>
            <MenuLabel text={m} />
          </MenuButton>
        ))}
        <MdiButtons>
          <FrameButton $raised aria-label="Minimize drawing"><MinusGlyph /></FrameButton>
          <FrameButton $raised aria-label="Restore drawing"><RestoreGlyph /></FrameButton>
          <FrameButton $raised aria-label="Close drawing"><CloseGlyph /></FrameButton>
        </MdiButtons>
      </MenuBar>

      <ToolRow>
        <Grip><i /></Grip>
        {standard.map((set, n) => (
          <React.Fragment key={n}>
            {n > 0 && <Rule />}
            {set.map((t) => (
              <ToolButton key={t} aria-label={t}><Icon name={t} /></ToolButton>
            ))}
          </React.Fragment>
        ))}
      </ToolRow>

      <ToolRow>
        <LayerGroup>
          <Grip><i /></Grip>
          <ToolButton aria-label="Layers"><Icon name="layers" /></ToolButton>
          <Combo name="Layer" value="0" width={296}>
            <ComboIcons>
              <LayerState />
              <Swatch size={14} />
            </ComboIcons>
          </Combo>
        </LayerGroup>
        <Grip><i /></Grip>
        <PropertyCombos>
          <Combo name="Line color" value="ByLayer" width={149}>
            <ComboIcons><Swatch /></ComboIcons>
          </Combo>
          <Rule />
          <Combo name="Line style" value={`ByLayer${gap}Solid line`} width={149} />
          <Rule />
          <Combo name="Line weight" value="ByLayer" width={149}>
            <Stroke />
          </Combo>
        </PropertyCombos>
      </ToolRow>

      <Body>
        <SideTools>
          <Grip $across><i /></Grip>
          {drawTools.map((t) => (
            <ToolButton key={t} aria-label={t}><Icon name={t} /></ToolButton>
          ))}
        </SideTools>

        <Center>
          <Upper>
            <Dock>
              <DockHead>
                <DockTitle>Properties</DockTitle>
                <FrameButton aria-label="Float panel"><RestoreGlyph /></FrameButton>
                <FrameButton aria-label="Close panel"><CloseGlyph /></FrameButton>
              </DockHead>
              <SelectionRow>
                <Combo name="Selection" value="No Selection" width={122} />
                <SmallButton aria-label="Select"><Icon name="pickSet" /></SmallButton>
                <SmallButton aria-label="Select on screen"><Icon name="pickScreen" /></SmallButton>
                <SmallButton aria-label="Smart select"><Icon name="quickPick" /></SmallButton>
              </SelectionRow>
              <Scroller>
                <PropertyFrame>
                  <Group>
                    <GroupTitle>General</GroupTitle>
                    <InputField icon="globe" name="Hyperlink" value="" />
                    <ComboField icon="stack" name="Layer" value="0" />
                    <ComboField icon="paint" name="Color" value="ByLayer">
                      <ComboIcons><Swatch /></ComboIcons>
                    </ComboField>
                    <InputField icon="lineScale" name="Line scale" value="1.0000" />
                    <ComboField icon="lineStyle" name="Line style" value={`ByLayer${gap}Solid line`} />
                    <ComboField icon="lineWeight" name="Line weight" value="ByLayer">
                      <Stroke />
                    </ComboField>
                  </Group>
                  <Group>
                    <GroupTitle>PrintStyle</GroupTitle>
                    <ComboField icon="printStyle" name="Print style" value="None" />
                    <ComboField icon="colorBars" name="Print color" value="ByColor" off />
                    <InputField icon="colorTable" name="Print table" value="None" />
                  </Group>
                  <Group>
                    <GroupTitle>View</GroupTitle>
                    <InputField icon="centerX" name="Center X" value="14307.2282" />
                    <InputField icon="centerY" name="Center Y" value="-13901.8979" />
                    <InputField icon="centerZ" name="Center Z" value="0.0000" />
                  </Group>
                </PropertyFrame>
                <Track><Thumb $share={64} /></Track>
              </Scroller>
              <DockTabs>
                <DockTab>Home</DockTab>
                <DockTab $active>Properties</DockTab>
              </DockTabs>
            </Dock>
            <SplitHandle><Grip><i /></Grip></SplitHandle>
            <Stage>
              <Blueprint />
              <SheetTabs>
                <SheetTab>
                  <svg viewBox="0 0 64 19" preserveAspectRatio="none">
                    <path d="M0 0l6 18h50l7-18" fill="#fff" stroke="#444" />
                  </svg>
                  <span>Model</span>
                </SheetTab>
                <SheetTab>
                  <svg viewBox="0 0 74 19" preserveAspectRatio="none">
                    <path d="M2 10l5 7h60l6-17H5z" fill="#f8f8f8" />
                    <path d="M2 10l5 7h60l6-17" fill="none" stroke="#444" />
                  </svg>
                  <span>Layout1</span>
                </SheetTab>
              </SheetTabs>
            </Stage>
          </Upper>
          <SplitHandle $across><Grip $across><i /></Grip></SplitHandle>
          <CommandHead>
            <DockTitle>Command window</DockTitle>
            <FrameButton aria-label="Float command window"><RestoreGlyph /></FrameButton>
            <FrameButton aria-label="Close command window"><CloseGlyph /></FrameButton>
          </CommandHead>
          <CommandBox>
            <History role="log">
              <HistoryLine>: _ABOUT</HistoryLine>
              <HistoryLine />
            </History>
            <Track><Thumb $share={64} /></Track>
          </CommandBox>
          <CommandInput aria-label="Command" defaultValue=":" />
        </Center>

        <SideTools>
          <Grip $across><i /></Grip>
          {modifyTools.map((t) => (
            <ToolButton key={t} aria-label={t}><Icon name={t} /></ToolButton>
          ))}
        </SideTools>
      </Body>

      <StatusBar>
        {modes.map(([name, on]) => (
          <StatusButton key={name} $on={on} aria-pressed={on}>{name}</StatusButton>
        ))}
        <StatusText>(15593.2915,-16651.0911,0.0000)</StatusText>
      </StatusBar>
    </Shell>
  );
}
